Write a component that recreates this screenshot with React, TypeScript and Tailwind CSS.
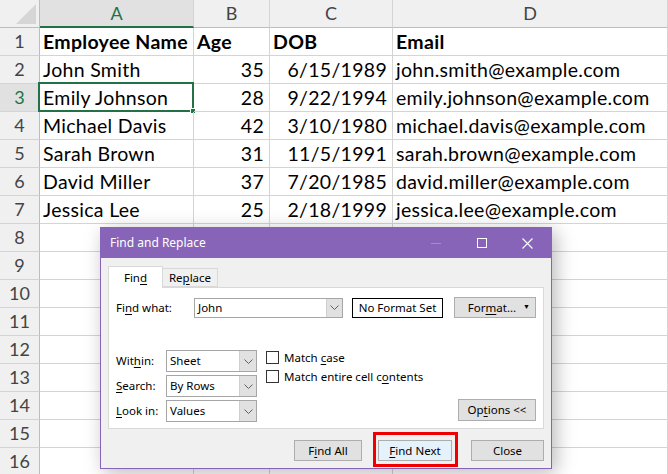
import React from 'react';

const rows: string[][] = [
  ['Employee Name', 'Age', 'DOB', 'Email'],
  ['John Smith', '35', '6/15/1989', 'john.smith@example.com'],
  ['Emily Johnson', '28', '9/22/1994', 'emily.johnson@example.com'],
  ['Michael Davis', '42', '3/10/1980', 'michael.davis@example.com'],
  ['Sarah Brown', '31', '11/5/1991', 'sarah.brown@example.com'],
  ['David Miller', '37', '7/20/1985', 'david.miller@example.com'],
  ['Jessica Lee', '25', '2/18/1999', 'jessica.lee@example.com'],
];

const cols = ['A', 'B', 'C', 'D'];

function U({ children }: { children: React.ReactNode }) {
  return <span className="underline underline-offset-2">{children}</span>;
}

function Chevron() {
  return (
    <svg width="9" height="5" viewBox="0 0 9 5" fill="none">
      <path d="M0.5 0.5 L4.5 4.5 L8.5 0.5" stroke="#606060" strokeWidth="1" />
    </svg>
  );
}

function Select({ value, width }: { value: string; width: string }) {
  return (
    <div className={`${width} h-[22px] flex border border-[#a6a6a6] bg-white`}>
      <div className="flex-1 pl-[3px] flex items-center">{value}</div>
      <div className="w-[17px] bg-[#e1e1e1] border-l border-[#cfcfcf] flex items-center justify-center">
        <Chevron />
      </div>
    </div>
  );
}

function Btn({ children, className = '' }: { children: React.ReactNode; className?: string }) {
  return (
    <div className={`h-[21px] flex items-center justify-center border border-[#adadad] bg-[#e1e1e1] ${className}`}>
      {children}
    </div>
  );
}

function Check({ children }: { children: React.ReactNode }) {
  return (
    <div className="flex items-center gap-[5px] h-[19px]">
      <div className="w-[13px] h-[13px] border border-[#333] bg-white" />
      <span>{children}</span>
    </div>
  );
}

function Dialog() {
  return (
    <div
      className="absolute left-[100px] top-[227px] w-[452px] h-[242px] border border-[#8764b8] bg-[#f0f0f0] shadow-[4px_4px_18px_rgba(0,0,0,0.28)] flex flex-col text-[11.5px] text-black"
      style={{ fontFamily: '"Noto Sans", "Liberation Sans", sans-serif' }}
    >
      {/* title bar */}
      <div className="h-[30px] bg-[#8764b8] flex items-center text-white pl-[9px]">
        <span className="text-[12px]">Find and Replace</span>
        <div className="ml-auto flex items-center">
          <svg width="46" height="30" viewBox="0 0 46 30">
            <line x1="18" y1="15.5" x2="28" y2="15.5" stroke="#a58ccf" strokeWidth="1" />
          </svg>
          <svg width="46" height="30" viewBox="0 0 46 30">
            <rect x="18.5" y="10.5" width="9" height="9" stroke="#fff" fill="none" strokeWidth="1" />
          </svg>
          <svg width="46" height="30" viewBox="0 0 46 30">
            <path d="M17.5 10.5 L27.5 20.5 M27.5 10.5 L17.5 20.5" stroke="#fff" strokeWidth="1.1" />
          </svg>
        </div>
      </div>

      <div className="flex-1 px-[7px] pt-[8px] flex flex-col">
        {/* tabs */}
        <div className="flex items-end h-[21px] relative z-10">
          <div className="w-[55px] h-[22px] bg-white border border-b-0 border-[#d9d9d9] flex items-center justify-center -mb-px">
            Fin<U>d</U>
          </div>
          <div className="w-[55px] h-[19px] bg-[#f0f0f0] border border-l-0 border-[#d9d9d9] flex items-center justify-center">
            Re<U>p</U>lace
          </div>
        </div>

        {/* panel */}
        <div className="h-[142px] bg-white border border-[#d9d9d9] pl-[7px] pr-[7px] pt-[9px] flex flex-col">
          <div className="flex items-center">
            <span className="w-[78px]">Fi<U>n</U>d what:</span>
            <div className="w-[149px] h-[20px] flex border border-[#a6a6a6]">
              <div className="flex-1 pl-[3px] flex items-center">John</div>
              <div className="w-[16px] bg-[#e1e1e1] border-l border-[#cfcfcf] flex items-center justify-center">
                <Chevron />
              </div>
            </div>
            <div className="ml-[9px] w-[91px] h-[20px] border border-black flex items-center justify-center">
              No Format Set
            </div>
            <Btn className="ml-auto w-[82px] h-[20px] relative">
              <span className="-ml-[6px]">For<U>m</U>at...</span>
              <span className="absolute right-[5px] top-[4px] text-[7px]">▼</span>
            </Btn>
          </div>

          <div className="mt-[32px] flex">
            <div className="flex flex-col gap-[3px]">
              <div className="flex items-center">
                <span className="w-[50px]">Wit<U>h</U>in:</span>
                <Select value="Sheet" width="w-[91px]" />
              </div>
              <div className="flex items-center">
                <span className="w-[50px]"><U>S</U>earch:</span>
                <Select value="By Rows" width="w-[91px]" />
              </div>
              <div className="flex items-center">
                <span className="w-[50px]"><U>L</U>ook in:</span>
                <Select value="Values" width="w-[91px]" />
              </div>
            </div>
            <div className="ml-[9px] -mt-[2px] flex flex-col">
              <Check>
                Match <U>c</U>ase
              </Check>
              <Check>
                Match entire cell c<U>o</U>ntents
              </Check>
            </div>
            <div className="ml-auto flex items-end">
              <Btn className="w-[78px] h-[22px] mb-px">
                Op<U>t</U>ions &lt;&lt;
              </Btn>
            </div>
          </div>
        </div>

        {/* buttons */}
        <div className="mt-[11px] flex items-center justify-end">
          <Btn className="w-[68px]">
            F<U>i</U>nd All
          </Btn>
          <div className="relative ml-[16px]">
            <Btn className="w-[74px] bg-[#e5f1fb] border-[#0078d7]">
              <U>F</U>ind Next
            </Btn>
            <div className="absolute -left-[5px] -right-[6px] -top-[8px] -bottom-[6px] border-[3px] border-[#ee0000]" />
          </div>
          <Btn className="ml-[19px] w-[73px]">Close</Btn>
        </div>
      </div>
    </div>
  );
}

export default function App() {
  const totalRows = 17;
  return (
    <div
      className="relative w-[668px] h-[474px] overflow-hidden bg-white"
      style={{ fontFamily: 'Lato, "Liberation Sans", sans-serif' }}
    >
      <div className="grid grid-cols-[40px_154px_76px_123px_1fr] auto-rows-[28px] text-[18px]">
        {/* header row */}
        <div className="bg-[#f0f0f0] border-r border-b border-[#bdbdbd] relative overflow-hidden">
          <svg className="absolute right-[3px] bottom-[3px]" width="20" height="20" viewBox="0 0 20 20">
            <polygon points="20,0 20,20 0,20" fill="#d6d6d6" />
          </svg>
        </div>
        {cols.map((c) => (
          <div
            key={c}
            className={
              c === 'A'
                ? 'bg-[#e1e1e1] border-r border-[#d4d4d4] border-b-2 border-b-[#217346] text-[#217346] flex items-center justify-center'
                : 'bg-[#f0f0f0] border-r border-[#d4d4d4] border-b border-b-[#bdbdbd] text-[#444] flex items-center justify-center'
            }
          >
            {c}
          </div>
        ))}

        {Array.from({ length: totalRows - 1 }).map((_, i) => {
          const r = i + 1;
          const data = rows[i];
          const sel = r === 3;
          return (
            <React.Fragment key={r}>
              <div
                className={`border-r border-r-[#bdbdbd] border-b border-b-[#d4d4d4] flex items-center justify-center ${
                  sel ? 'bg-[#e1e1e1] text-[#217346]' : 'bg-[#f0f0f0] text-[#444]'
                }`}
              >
                {r}
              </div>
              {cols.map((c, ci) => {
                const v = data ? data[ci] : '';
                const right = r > 1 && (ci === 1 || ci === 2);
                return (
                  <div
                    key={c}
                    className={`relative border-r border-b border-[#d4d4d4] flex items-center whitespace-nowrap text-[19.5px] tracking-[0.3px] ${
                      right ? 'justify-end pr-[5px]' : 'pl-[3px]'
                    } ${r === 1 ? 'font-bold' : ''}`}
                  >
                    {v}
                    {sel && ci === 0 && (
                      <div className="absolute -left-[2px] -top-[2px] -right-px -bottom-px border-2 border-[#217346]">
                        <div className="absolute -right-[4px] -bottom-[4px] w-[6px] h-[6px] bg-[#217346] border border-white" />
                      </div>
                    )}
                  </div>
                );
              })}
            </React.Fragment>
          );
        })}
      </div>
      <Dialog />
    </div>
  );
}
